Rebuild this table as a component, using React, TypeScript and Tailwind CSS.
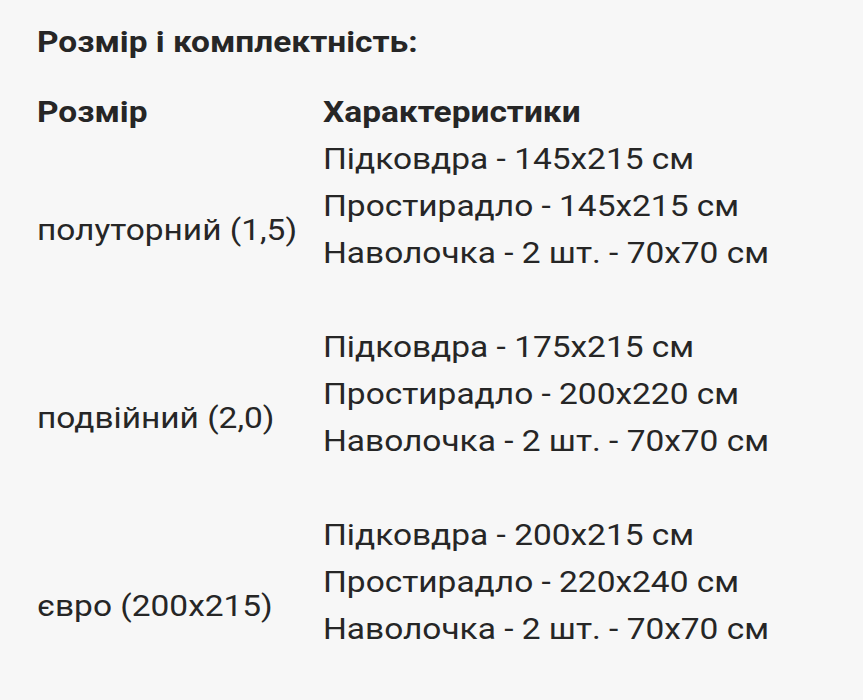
const rows = [
  {
    size: "полуторний (1,5)",
    items: ["Підковдра - 145x215 см", "Простирадло - 145x215 см", "Наволочка - 2 шт. - 70x70 см"],
  },
  {
    size: "подвійний (2,0)",
    items: ["Підковдра - 175x215 см", "Простирадло - 200x220 см", "Наволочка - 2 шт. - 70x70 см"],
  },
  {
    size: "євро (200x215)",
    items: ["Підковдра - 200x215 см", "Простирадло - 220x240 см", "Наволочка - 2 шт. - 70x70 см"],
  },
];

export default function App() {
  return (
    <div
      className="w-[863px] h-[700px] overflow-hidden bg-[#f7f7f7] text-[#262626] pl-[37px] pt-[18px]"
      style={{ fontFamily: "Roboto, 'Noto Sans', sans-serif" }}
    >
      {/* text in the shot is a little wider than plain Roboto */}
      <div className="origin-left scale-x-[1.115] text-[30px] leading-[47px]">
        <h2 className="font-bold">Розмір і комплектність:</h2>
        <div className="mt-[23px] grid grid-cols-[256.5px_1fr]">
          <div className="font-bold">Розмір</div>
          <div className="font-bold">Характеристики</div>
          {rows.map((r) => (
            <div key={r.size} className="contents">
              <div className="flex items-center">{r.size}</div>
              <div className="flex flex-col">
                {r.items.map((t) => (
                  <span key={t}>{t}</span>
                ))}
                <span>&nbsp;</span>
              </div>
            </div>
          ))}
        </div>
      </div>
    </div>
  );
}
